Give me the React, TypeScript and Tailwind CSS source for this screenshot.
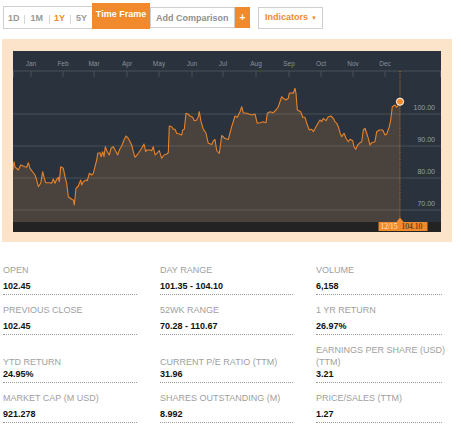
import React from "react";

// price path traced in page coordinates (chart viewBox starts at 13,51)
const pts: [number, number][] = [
  [13, 170], [14, 161.7], [15, 167], [18.3, 170], [20.7, 165], [25, 166.7], [26.7, 167.3], [28.3, 162.7], [30, 168.3],
  [35, 175], [36.7, 180], [38.3, 186.7], [40.7, 183.3], [42.7, 171.7], [44.3, 178.3], [45.7, 182.7], [50, 182.7],
  [51.7, 183.3], [53.3, 179], [55, 183.3], [56.7, 179.3], [58.3, 177.3], [59.3, 181.7], [60.7, 166.7], [63.3, 168.3],
  [65, 176.7], [66.7, 183.3], [68.3, 196.7], [71.7, 199.3], [73.3, 200], [74.3, 205], [76, 188.3], [78.3, 186],
  [80.7, 180], [81.7, 185], [83.3, 181.7], [86, 180], [87.3, 180.7], [89.3, 173.3], [91.7, 175], [93.3, 173.3],
  [95, 166.7], [96.7, 160], [97.7, 153.3], [100, 152.7], [101, 156.7], [102.7, 151.7], [104, 156.7], [105.3, 146.7],
  [107.3, 151.7], [109.3, 155], [111, 148.3], [113.3, 146.7], [116, 151.7], [117.7, 155], [119.3, 150], [121.7, 146],
  [124, 140], [126, 136], [128.3, 138.3], [130, 141.7], [131.7, 145], [133.3, 151.7], [135, 157.3], [138.3, 153.3],
  [141.7, 148.3], [144, 144], [145.7, 151.7], [146.7, 150], [150, 150], [151.7, 150.7], [153.3, 146.7], [155, 155],
  [156.7, 153.3], [159.3, 150.7], [161.7, 158.3], [164, 155], [166.7, 154], [168.3, 152.7], [169.3, 126],
  [171.7, 126.7], [173.3, 129.3], [175, 129.3], [176.7, 133.3], [179.3, 134], [181.7, 135], [182.7, 130],
  [184.3, 129.3], [186, 113.3], [188.3, 114.3], [190, 116], [192.7, 117.3], [194.3, 120.7], [196.7, 120],
  [198.3, 116.7], [199.3, 111.7], [201, 121.7], [203.3, 129], [206, 133.3], [208.3, 143.3], [211.7, 144.5],
  [213.3, 141], [215, 139.5], [216.7, 150.5], [219.3, 153.5], [221.7, 135.5], [225, 138.5], [228.3, 139.5],
  [231.7, 126.7], [235, 116], [237.3, 117.3], [240, 111.7], [241.7, 106.7], [243.3, 112.7], [246.7, 113.3],
  [251.7, 115], [255, 114], [257.3, 123.3], [260, 122.7], [263.3, 121.7], [266, 122.7], [267.3, 113.3],
  [270, 111.7], [273.3, 112.7], [276, 110], [278.3, 106.7], [280, 101.7], [281.7, 96.7], [283.3, 98.3], [286, 100],
  [288.3, 98.3], [289.3, 93.3], [291.7, 92.7], [293.3, 93.3], [295, 88.3], [296, 93.3], [297.3, 110],
  [300.7, 111.7], [302.7, 117.3], [305, 117.3], [307.3, 125], [309.3, 130], [311.7, 129.3], [313.3, 131.7],
  [316, 126.7], [318.3, 122.7], [320, 120], [321.7, 121.7], [323.3, 118.3], [326, 120.7], [328.3, 116.7],
  [331, 116], [333.3, 118.3], [335, 121.7], [336.7, 123.3], [338.3, 126.7], [340, 132.7], [341.7, 136.7],
  [344, 133.3], [346, 138.3], [348.3, 141.7], [350, 139.3], [352.7, 140.7], [354, 146.7], [355.7, 149.3],
  [357.7, 145], [360, 142.7], [361.7, 141.7], [363.3, 130], [365, 128.3], [366.7, 133.3], [368.3, 138.3],
  [370, 145], [371.7, 142.7], [375, 141.7], [376.7, 131.7], [379.3, 130], [382.7, 130], [385, 135],
  [386.7, 134], [389.3, 126.7], [390.7, 120], [392.3, 106.7], [395, 105], [396.7, 107.3], [398.3, 105],
  [400, 101.7],
];

const months: [string, number][] = [
  ["Jan", 31], ["Feb", 63], ["Mar", 94], ["Apr", 127], ["May", 159], ["Jun", 192],
  ["Jul", 223], ["Aug", 256], ["Sep", 289], ["Oct", 321], ["Nov", 353], ["Dec", 385],
];

const grid: [string, number][] = [
  ["100.00", 114], ["90.00", 146], ["80.00", 178], ["70.00", 210],
];

const stats = [
  [
    { label: "OPEN", value: "102.45" },
    { label: "DAY RANGE", value: "101.35 - 104.10" },
    { label: "VOLUME", value: "6,158" },
  ],
  [
    { label: "PREVIOUS CLOSE", value: "102.45" },
    { label: "52WK RANGE", value: "70.28 - 110.67" },
    { label: "1 YR RETURN", value: "26.97%" },
  ],
  [
    { label: "YTD RETURN", value: "24.95%" },
    { label: "CURRENT P/E RATIO (TTM)", value: "31.96" },
    { label: "EARNINGS PER SHARE (USD)\n(TTM)", value: "3.21" },
  ],
  [
    { label: "MARKET CAP (M USD)", value: "921.278" },
    { label: "SHARES OUTSTANDING (M)", value: "8.992" },
    { label: "PRICE/SALES (TTM)", value: "1.27" },
  ],
];

const PriceChart: React.FC = () => {
  const line = pts.map(([x, y], i) => `${i ? "L" : "M"}${x} ${y}`).join(" ");
  const area = `${line} L400 222 L13 222 Z`;

  return (
    <svg width={428} height={181} viewBox="13 51 428 181" className="block">
      <rect x={13} y={51} width={428} height={181} fill="#29323d" />
      <path d={area} fill="#4a423c" />
      {grid.map(([t, y]) => (
        <g key={t}>
          <line x1={13} x2={441} y1={y} y2={y} stroke="rgba(255,255,255,0.14)" strokeWidth={1} />
          <text x={435} y={y - 4.5} textAnchor="end" fontSize={7} fill="#9aa0a8" fontFamily="Liberation Sans, Arial, sans-serif">
            {t}
          </text>
        </g>
      ))}
      <line x1={13} x2={441} y1={71} y2={71} stroke="#4a515b" strokeWidth={1} />
      {[13.5, 440.5, ...months.map((m) => m[1])].map((x) => (
        <line key={x} x1={x} x2={x} y1={71} y2={77} stroke="#4a515b" strokeWidth={1} />
      ))}
      {months.map(([m, x]) => (
        <text key={m} x={x} y={66.3} textAnchor="middle" fontSize={6.5} fill="#8b919a" fontFamily="Liberation Sans, Arial, sans-serif">
          {m}
        </text>
      ))}
      <path d={line} fill="none" stroke="#e8832a" strokeWidth={1.1} strokeLinejoin="round" />
      <line x1={400} x2={400} y1={71} y2={218} stroke="#e8832a" strokeWidth={0.8} strokeDasharray="1 1.2" />
      <circle cx={400} cy={101.7} r={3.6} fill="#f08a2c" stroke="#ffffff" strokeWidth={1} />
      <rect x={13} y={222} width={428} height={10} fill="#232323" />
      <path d="M396.5 222 L400 217.5 L403.5 222 Z" fill="#f08a2c" />
      <rect x={378.5} y={222} width={49} height={9} fill="#f08a2c" />
      <text x={380.5} y={229.4} fontSize={7.5} fill="#fde8cf" fontFamily="Liberation Serif, Times New Roman, serif">
        12/15
      </text>
      <text x={401.5} y={229.4} fontSize={7.5} fill="#2a1c10" fontFamily="Liberation Serif, Times New Roman, serif">
        104.10
      </text>
    </svg>
  );
};

const App: React.FC = () => {
  return (
    <div className="w-[461px] h-[430px] bg-white overflow-hidden font-['Liberation_Sans',Arial,sans-serif]">
      {/* toolbar */}
      <div className="flex items-start pl-[3px] text-[9px] font-bold">
        <div className="mt-[6px] h-[23px] w-[90px] border border-[#cfcfcf] flex items-center pt-[3px] text-[#9a9a9a]">
          <span className="ml-[4px]">1D</span>
          <span className="ml-[4px] w-px h-[9px] bg-[#d6d6d6]" />
          <span className="ml-[6px]">1M</span>
          <span className="ml-[6px] w-px h-[9px] bg-[#d6d6d6]" />
          <span className="ml-[4px] text-[#f08a2c]">1Y</span>
          <span className="ml-[5px] w-px h-[9px] bg-[#d6d6d6]" />
          <span className="ml-[5px]">5Y</span>
        </div>
        <div className="mt-[3px] h-[26px] w-[58px] -ml-px bg-[#f08a2c] text-white flex items-center justify-center pb-[2px]">
          Time Frame
        </div>
        <div className="mt-[7px] h-[21px] w-[85px] border border-[#cfcfcf] flex items-center pl-[5px] pt-[2px] text-[#8f8f8f]">
          Add Comparison
        </div>
        <div className="mt-[7px] h-[21px] w-[15px] bg-[#f08a2c] text-white flex items-center justify-center text-[10px]">
          +
        </div>
        <div className="ml-[8px] mt-[7px] h-[22px] w-[65px] border border-[#cfcfcf] flex items-center pl-[6px] text-[#f08a2c]">
          Indicators
          <span className="ml-[3px] text-[6px]">▼</span>
        </div>
      </div>

      {/* chart */}
      <div className="ml-[2px] mt-[10px] w-[450px] h-[203px] bg-[#fbe4c9] pl-[11px] pt-[12px]">
        <PriceChart />
      </div>

      {/* stats */}
      <div className="mt-[22px] ml-[3px] grid grid-cols-[134px_133px_126px] gap-x-[23px] gap-y-[9px]">
        {stats.map((row, r) =>
          row.map((s) => (
            <div key={s.label} className="flex flex-col justify-end border-b border-dotted border-[#9a9a9a] pb-[2px]">
              <div className="text-[9px] leading-[12px] text-[#a0a0a0] whitespace-pre">{s.label}</div>
              <div className={`text-[9px] leading-[12px] font-bold text-[#111] ${r === 2 ? "mt-0" : "mt-[4px]"}`}>
                {s.value}
              </div>
            </div>
          ))
        )}
      </div>
    </div>
  );
};

export default App;
